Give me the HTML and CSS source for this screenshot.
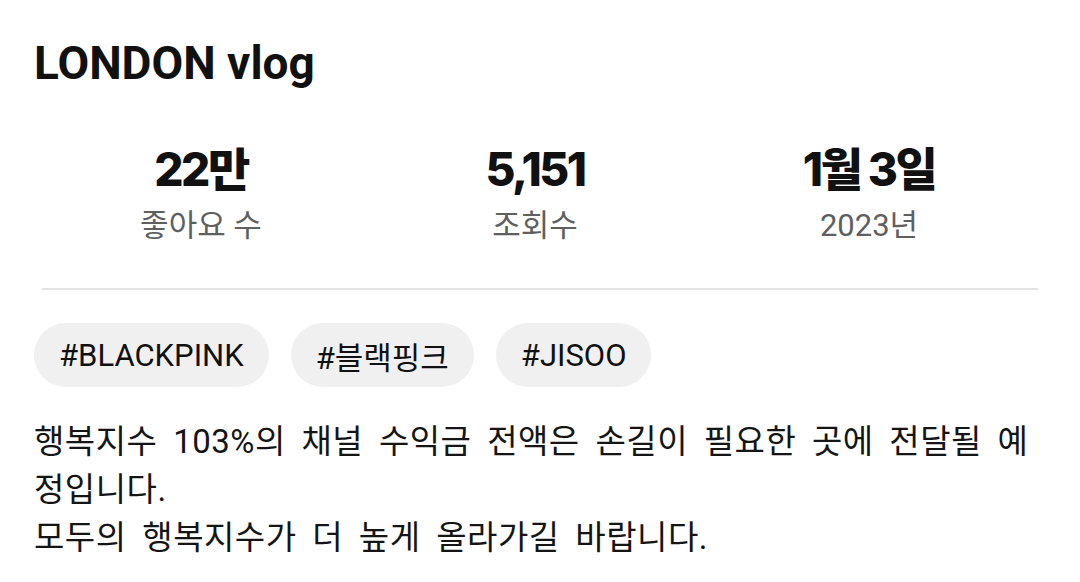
FILE: index.html
```html
<!DOCTYPE html>
<html lang="ko">
<head>
    <meta charset="UTF-8">
    <meta name="viewport" content="width=device-width, initial-scale=1.0">
    <title>LONDON vlog</title>
    <link rel="stylesheet" href="styles.css">
</head>
<body>

    <div class="page">
        <h1 class="title">LONDON vlog</h1>

        <div class="stats">
            <div class="stat">
                <div class="stat-value">22만</div>
                <div class="stat-label">좋아요 수</div>
            </div>
            <div class="stat">
                <div class="stat-value">5,151</div>
                <div class="stat-label">조회수</div>
            </div>
            <div class="stat">
                <div class="stat-value">1월 3일</div>
                <div class="stat-label">2023년</div>
            </div>
        </div>

        <div class="divider"></div>

        <div class="tags">
            <span class="tag">#BLACKPINK</span>
            <span class="tag">#블랙핑크</span>
            <span class="tag">#JISOO</span>
        </div>

        <p class="description">행복지수 103%의 채널 수익금 전액은 손길이 필요한 곳에 전달될 예정입니다.<br>모두의 행복지수가 더 높게 올라가길 바랍니다.</p>
    </div>

</body>
</html>
```

FILE: styles.css
```css
body {
    margin: 0;
    background-color: #fff;
    font-family: Roboto, "Noto Sans CJK KR", sans-serif;
    color: #111;
}
.page {
    padding: 35px 34px 0 34px;
}
.title {
    margin: 0;
    font-family: Roboto, "Noto Sans CJK KR", sans-serif;
    font-size: 46px;
    line-height: 56px;
    font-weight: 700;
    color: #111;
}
.stats {
    display: grid;
    grid-template-columns: repeat(3, 1fr);
    margin: 52px 10px 0 0;
}
.stat {
    text-align: center;
}
.stat-value {
    font-family: Inter, "Noto Sans CJK KR", sans-serif;
    font-size: 46px;
    line-height: 52px;
    font-weight: 800;
    letter-spacing: -2.5px;
    color: #111;
}
.stat-label {
    margin-top: 9px;
    font-family: Roboto, "Noto Sans CJK KR", sans-serif;
    font-size: 31px;
    line-height: 44px;
    color: #5f5f5f;
}
.divider {
    height: 2px;
    margin: 40px 8px 0 8px;
    background-color: #e4e4e4;
}
.tags {
    display: flex;
    gap: 22px;
    margin-top: 33px;
}
.tag {
    display: flex;
    align-items: center;
    height: 64px;
    padding: 0 25px;
    border-radius: 32px;
    background-color: #f0f0f0;
    font-size: 31px;
    color: #111;
}
.description {
    margin: 31px 10px 0 0;
    font-size: 33px;
    line-height: 48px;
    letter-spacing: 0.5px;
    word-spacing: 7px;
    color: #151515;
}
```
